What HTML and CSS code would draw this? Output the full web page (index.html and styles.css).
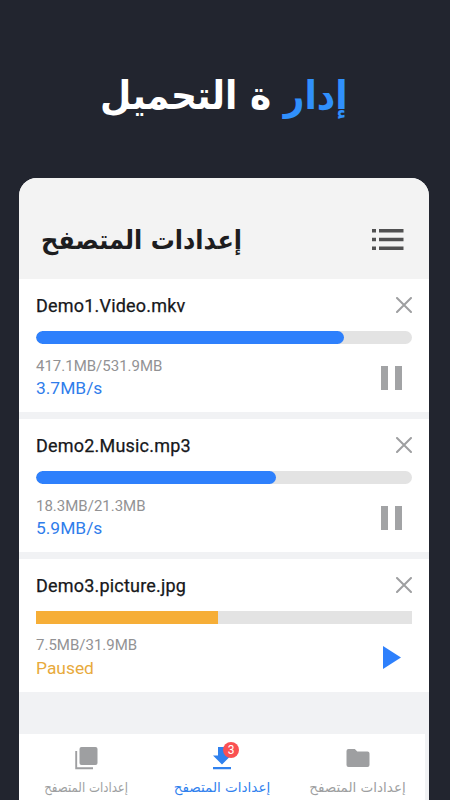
FILE: index.html
```html
<!DOCTYPE html>
<html lang="ar">
<head>
<meta charset="utf-8">
<title>إدارة التحميل</title>
<link rel="stylesheet" href="styles.css">
</head>
<body>
<h1 class="headline"><span class="fit" dir="rtl"><span class="accent">إدار</span> ة التحميل</span></h1>
<main class="phone">
  <header class="bar">
    <h2 class="bar-title"><span class="fit" dir="rtl">إعدادات المتصفح</span></h2>
    <svg class="menu" viewBox="0 0 32 22" fill="#505051"><path d="M0 0h4v3.500H0zM7 0h24.500v3.500H7zM0 8.800h4v3.500H0zM7 8.800h24.500v3.500H7zM0 17.500h4V21H0zM7 17.500h24.500V21H7z"/></svg>
  </header>
  <section class="list">
    <article class="item">
      <div class="row"><h3 class="name">Demo1.Video.mkv</h3><svg class="close" viewBox="0 0 16 16"><path d="M1 1l14 14M15 1L1 15"/></svg></div>
      <div class="track"><div class="fill" style="width:308px"></div></div>
      <div class="row"><div><p class="size">417.1MB/531.9MB</p><p class="speed">3.7MB/s</p></div><svg class="pause" viewBox="0 0 21 24"><path d="M0 0h7v24H0zM14 0h7v24h-7z"/></svg></div>
    </article>
    <article class="item">
      <div class="row"><h3 class="name">Demo2.Music.mp3</h3><svg class="close" viewBox="0 0 16 16"><path d="M1 1l14 14M15 1L1 15"/></svg></div>
      <div class="track"><div class="fill" style="width:239.500px"></div></div>
      <div class="row"><div><p class="size">18.3MB/21.3MB</p><p class="speed">5.9MB/s</p></div><svg class="pause" viewBox="0 0 21 24"><path d="M0 0h7v24H0zM14 0h7v24h-7z"/></svg></div>
    </article>
    <article class="item paused">
      <div class="row"><h3 class="name">Demo3.picture.jpg</h3><svg class="close" viewBox="0 0 16 16"><path d="M1 1l14 14M15 1L1 15"/></svg></div>
      <div class="track"><div class="fill" style="width:182px"></div></div>
      <div class="row"><div><p class="size">7.5MB/31.9MB</p><p class="speed">Paused</p></div><svg class="play" viewBox="0 0 18 23"><path d="M0 0l18 11.500L0 23z"/></svg></div>
    </article>
  </section>
  <nav class="tabs">
    <div class="tab tab-a">
      <svg class="icon" viewBox="0 0 24 24"><path d="M6.500 1h14a2 2 0 0 1 2 2v14a2 2 0 0 1-2 2h-14a2 2 0 0 1-2-2V3a2 2 0 0 1 2-2z"/><path d="M1.200 5v17.200H18" fill="none" stroke="currentColor" stroke-width="1.900"/></svg>
      <span class="label"><span class="fit" dir="rtl">إعدادات المتصفح</span></span>
    </div>
    <div class="tab tab-b active">
      <div class="icon-wrap"><svg class="icon" viewBox="0 0 24 24"><path d="M8 1h8v8.500h5L12 18.500 3 9.500h5zM3 21h18v2.200H3z"/></svg><span class="badge">3</span></div>
      <span class="label"><span class="fit" dir="rtl">إعدادات المتصفح</span></span>
    </div>
    <div class="tab tab-c">
      <svg class="icon" viewBox="0 0 24 24"><path d="M2.500 3h6.300l2.500 2.500h10.200a2 2 0 0 1 2 2V19a2 2 0 0 1-2 2h-19a2 2 0 0 1-2-2V5a2 2 0 0 1 2-2z"/></svg>
      <span class="label"><span class="fit" dir="rtl">إعدادات المتصفح</span></span>
    </div>
  </nav>
</main>
</body>
</html>
```
FILE: styles.css
```css
* { box-sizing: border-box; margin: 0; padding: 0; }
body {
  width: 450px; height: 800px; overflow: hidden;
  background: #22252f;
  font-family: Roboto, "DejaVu Sans", sans-serif;
}
svg { display: block; flex: none; }
.fit { display: inline-block; white-space: nowrap; transform-origin: 0 50%; }
.headline {
  height: 178px; padding: 68px 0 0 100px;
  font: bold 36px/56px "DejaVu Sans", sans-serif; color: #fff;
}
.headline .fit { transform: scaleY(1.1); }
.accent { color: #3090fc; }
.phone {
  width: 410px; height: 622px; margin-left: 19px;
  display: flex; flex-direction: column;
  border-radius: 18px 18px 0 0; overflow: hidden; background: #f1f2f4;
}
.bar {
  height: 101px; padding: 42px 25px 0 22px;
  display: flex; justify-content: space-between; background: #f3f3f3;
}
.bar-title { font: bold 24px/40px "DejaVu Sans", sans-serif; color: #1d1d1f; width: 210px; }
.bar-title .fit { transform: scaleY(1.08); }
.menu { width: 32px; height: 22px; margin-top: 9px; }
.list { height: 455px; display: flex; flex-direction: column; gap: 7px; }
.item { height: 133px; padding: 16px 17px 0; background: #fff; }
.row { display: flex; justify-content: space-between; }
.name { font-size: 18px; line-height: 22px; font-weight: 400; letter-spacing: 0.2px; color: #17181b; -webkit-text-stroke: 0.25px #17181b; }
.close { width: 16px; height: 16px; margin-top: 2px; fill: none; stroke: #9e9fa1; stroke-width: 2; stroke-linecap: round; }
.track { height: 13px; margin: 14px 0 12px; border-radius: 7px; background: #e3e3e3; overflow: hidden; }
.fill { height: 100%; border-radius: 7px; background: #2e80fc; }
.size { font-size: 15px; line-height: 20px; color: #929294; }
.speed { font-size: 17.4px; line-height: 24px; color: #2f7deb; }
.pause { width: 21px; height: 24px; margin: 10px 10.5px 0 0; fill: #a2a3a5; }
.play { width: 18px; height: 23px; margin: 11px 11px 0 0; fill: #2e80fc; }
.paused .track, .paused .fill { border-radius: 0; }
.paused .track { margin: 13.5px 0 11.5px; }
.paused .fill { background: #f6ae37; }
.paused .speed { color: #e8aa3c; line-height: 26px; }
.tabs {
  height: 66px; margin-right: 4px;
  display: grid; grid-template-columns: 135px 136px 135px; background: #fff;
}
.tab { padding-top: 12px; display: flex; flex-direction: column; align-items: center; color: #9e9fa1; }
.active { color: #3081ee; }
.icon { width: 24px; height: 24px; fill: currentColor; }
.icon-wrap { position: relative; }
.badge {
  position: absolute; left: 13px; top: -4px; width: 16px; height: 16px; border-radius: 50%;
  background: #fa5052; color: #fff; font-size: 12px; line-height: 16px; text-align: center;
}
.label { margin-top: 5px; font: 13.5px/24px "DejaVu Sans", sans-serif; }
.label .fit { transform-origin: 50% 50%; }
.tab-a .fit { transform: scaleX(0.87); }
```
